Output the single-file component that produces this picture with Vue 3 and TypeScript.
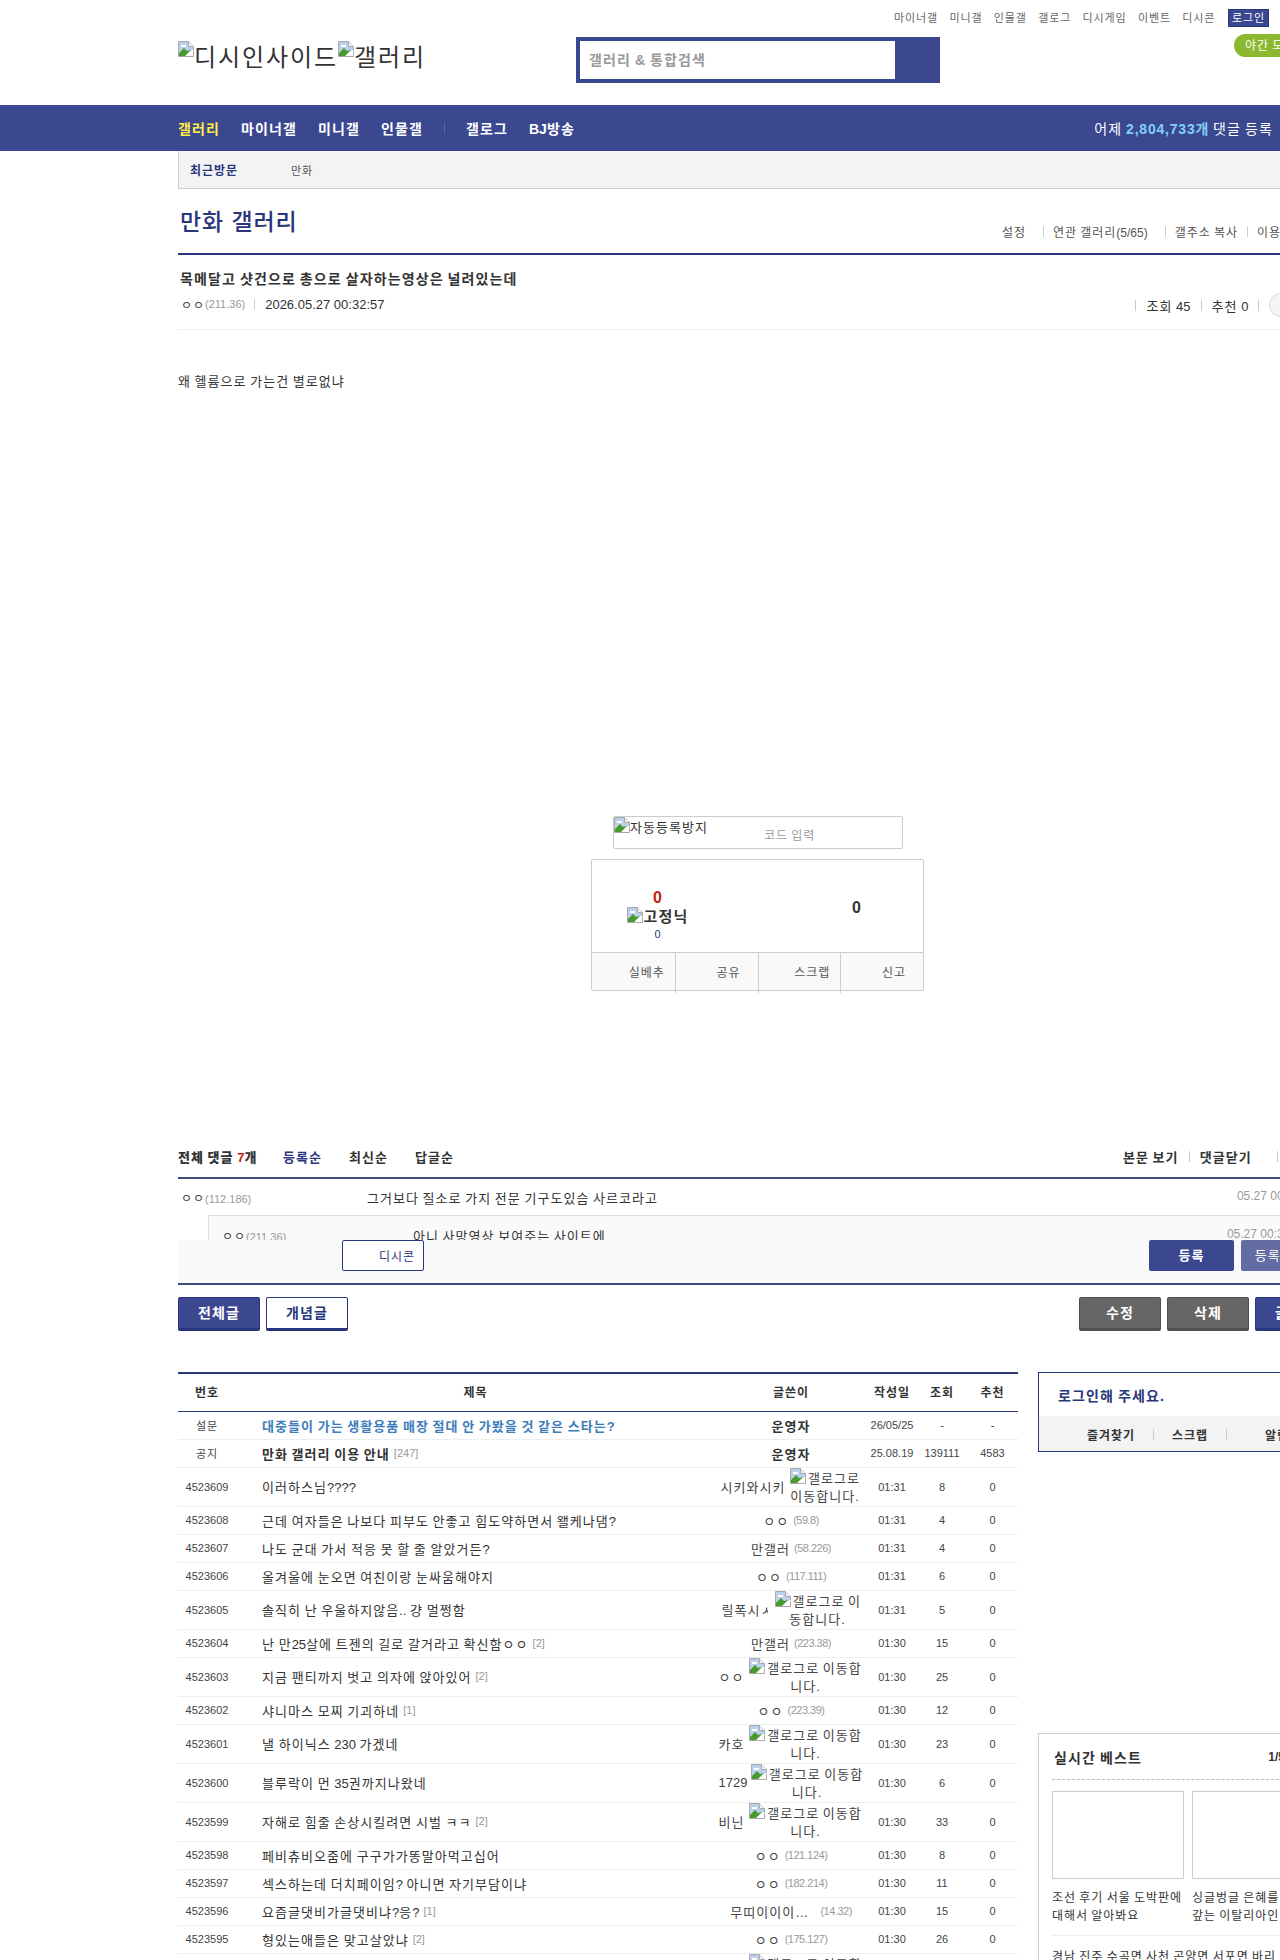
<script setup lang="ts">
interface Row {
  num: string
  title: string
  reply?: string
  nick: string
  cut?: boolean
  ip?: string
  alt?: [string, string]
  altWidth?: number
  date: string
  views: string
  rec: string
}

const topLinks = ['마이너갤', '미니갤', '인물갤', '갤로그', '디시게임', '이벤트', '디시콘']
const full: [string, string] = ['갤로그로 이동합', '니다.']

const rows: Row[] = [
  { num: '4523609', title: '이러하스님????', nick: '시키와시키', alt: ['갤로그로', '이동합니다.'], altWidth: 73, date: '01:31', views: '8', rec: '0' },
  { num: '4523608', title: '근데 여자들은 나보다 피부도 안좋고 힘도약하면서 왤케나댐?', nick: 'ㅇㅇ', ip: '(59.8)', date: '01:31', views: '4', rec: '0' },
  { num: '4523607', title: '나도 군대 가서 적응 못 할 줄 알았거든?', nick: '만갤러', ip: '(58.226)', date: '01:31', views: '4', rec: '0' },
  { num: '4523606', title: '올겨울에 눈오면 여친이랑 눈싸움해야지', nick: 'ㅇㅇ', ip: '(117.111)', date: '01:31', views: '6', rec: '0' },
  { num: '4523605', title: '솔직히 난 우울하지않음.. 걍 멀쩡함', nick: '릴폭시ㅅ', cut: true, alt: ['갤로그로 이', '동합니다.'], altWidth: 86, date: '01:31', views: '5', rec: '0' },
  { num: '4523604', title: '난 만25살에 트젠의 길로 갈거라고 확신함ㅇㅇ', reply: '[2]', nick: '만갤러', ip: '(223.38)', date: '01:30', views: '15', rec: '0' },
  { num: '4523603', title: '지금 팬티까지 벗고 의자에 앉아있어', reply: '[2]', nick: 'ㅇㅇ', alt: full, altWidth: 116, date: '01:30', views: '25', rec: '0' },
  { num: '4523602', title: '샤니마스 모찌 기괴하네', reply: '[1]', nick: 'ㅇㅇ', ip: '(223.39)', date: '01:30', views: '12', rec: '0' },
  { num: '4523601', title: '낼 하이닉스 230 가겠네', nick: '카호', alt: full, altWidth: 116, date: '01:30', views: '23', rec: '0' },
  { num: '4523600', title: '블루락이 먼 35권까지나왔네', nick: '1729', alt: full, altWidth: 113, date: '01:30', views: '6', rec: '0' },
  { num: '4523599', title: '자해로 힘줄 손상시킬려면 시벌 ㅋㅋ', reply: '[2]', nick: '비닌', alt: full, altWidth: 116, date: '01:30', views: '33', rec: '0' },
  { num: '4523598', title: '페비츄비오줌에 구구가가똥말아먹고십어', nick: 'ㅇㅇ', ip: '(121.124)', date: '01:30', views: '8', rec: '0' },
  { num: '4523597', title: '섹스하는데 더치페이임? 아니면 자기부담이냐', nick: 'ㅇㅇ', ip: '(182.214)', date: '01:30', views: '11', rec: '0' },
  { num: '4523596', title: '요즘글댓비가글댓비냐?응?', reply: '[1]', nick: '무띠이이이…\u00a0\u00a0', ip: '(14.32)', date: '01:30', views: '15', rec: '0' },
  { num: '4523595', title: '형있는애들은 맞고살았냐', reply: '[2]', nick: 'ㅇㅇ', ip: '(175.127)', date: '01:30', views: '26', rec: '0' },
  { num: '4523594', title: '', nick: 'ㅇㅇ', alt: full, altWidth: 116, date: '01:30', views: '9', rec: '0' },
]

// hangul gets tracked out below, ascii runs must stay at their normal width
function runs(text: string): { text: string; ascii: boolean }[] {
  return text
    .split(/([\x00-\x7f]+)/)
    .filter(Boolean)
    .map((part) => ({ text: part, ascii: /^[\x00-\x7f]/.test(part) }))
}
</script>

<template>
  <div class="page">
    <svg class="defs" width="0" height="0">
      <symbol id="broken" viewBox="0 0 16 16">
        <path d="M.5.5h10l5 5v10H.5z" fill="#fff" stroke="#a9a9a9" />
        <path d="M10.500.5v5h5" fill="#f4f4f4" stroke="#a9a9a9" />
        <path d="M1 1h9v5h5v3l-6 2-8 2z" fill="#bcd0ee" />
        <path d="M3 4h5v2H3z" fill="#fff" />
        <path d="M1 15v-3l5-5 3 3 4-1-6 6z" fill="#479a2e" />
        <path d="M9 16l7-7v1l-1 .5V15H10z" fill="#fff" />
      </symbol>
    </svg>

    <header class="head wrap">
      <div class="logo">
        <svg class="bk"><use href="#broken" /></svg>디시인사이드<svg class="bk"><use href="#broken" /></svg>갤러리
      </div>
      <form class="search">
        <input class="search__input" placeholder="갤러리 &amp; 통합검색" />
        <span class="search__btn" />
      </form>
      <div class="head__right">
        <nav class="top-links">
          <template v-for="(link, i) in topLinks" :key="link">
            <i v-if="i" class="sep" />
            <a>{{ link }}</a>
          </template>
          <a class="login-btn">로그인</a>
        </nav>
        <div class="night">야간 모드</div>
      </div>
    </header>

    <nav class="gnb">
      <div class="wrap gnb__in">
        <a class="on">갤러리</a>
        <a>마이너갤</a>
        <a>미니갤</a>
        <a>인물갤</a>
        <i class="gnb__sep" />
        <a>갤로그</a>
        <a><span class="n">BJ</span>방송</a>
        <p class="gnb__count">어제 <b>2,804,733개</b> 댓글 등록</p>
      </div>
    </nav>

    <div class="wrap recent">
      <b>최근방문</b>
      <span>만화</span>
    </div>

    <main class="wrap">
      <div class="gall-head">
        <h2>만화 갤러리</h2>
        <div class="gall-head__links">
          <a>설정</a><i class="sep sep--wide" />
          <a>연관 갤러리<span class="n">(5/65)</span></a><i class="sep sep--wide" />
          <a>갤주소 복사</a><i class="sep" />
          <a>이용안내</a>
        </div>
      </div>

      <section class="post-head">
        <h3>목메달고 샷건으로 총으로 살자하는영상은 널려있는데</h3>
        <div class="post-meta">
          <span class="nick">ㅇㅇ</span><span class="ip">(211.36)</span>
          <i class="sep sep--post" />
          <span class="stamp">2026.05.27 00:32:57</span>
          <span class="post-meta__right">
            <i class="sep" /><span>조회 <span class="n">45</span></span>
            <i class="sep" /><span>추천 <span class="n">0</span></span>
            <i class="sep" /><span class="circle" />
          </span>
        </div>
      </section>

      <section class="post-body">
        <p>왜 헬륨으로 가는건 별로없냐</p>
      </section>

      <div class="captcha">
        <span class="captcha__alt"><svg class="bk"><use href="#broken" /></svg>자동등록방지</span>
        <span class="captcha__ph">코드 입력</span>
      </div>

      <div class="rec">
        <div class="rec__top">
          <div class="rec__col rec__col--left">
            <strong class="red">0</strong>
            <span class="fix"><svg class="bk"><use href="#broken" /></svg>고정닉</span>
            <small>0</small>
          </div>
          <div class="rec__col rec__col--right">
            <strong>0</strong>
          </div>
        </div>
        <div class="rec__foot">
          <span>실베추</span><span>공유</span><span>스크랩</span><span>신고</span>
        </div>
      </div>

      <div class="cmt-head">
        <b>전체 댓글 <em class="n">7</em>개</b>
        <a class="active">등록순</a>
        <a>최신순</a>
        <a>답글순</a>
        <div class="cmt-head__right">
          <a>본문 보기</a><i class="sep" /><a>댓글닫기</a><i class="sep sep--far" />
        </div>
      </div>

      <div class="cmt-list">
        <div class="cmt">
          <span class="cmt__who"><span class="nick">ㅇㅇ</span><span class="ip">(112.186)</span></span>
          <span class="cmt__text">그거보다 질소로 가지 전문 기구도있슴 사르코라고</span>
          <span class="cmt__date">05.27 00:30:12</span>
        </div>
        <div class="cmt-reply">
          <span class="cmt__who"><span class="nick">ㅇㅇ</span><span class="ip">(211.36)</span></span>
          <span class="cmt__text">아니 사망영상 보여주는 사이트에</span>
          <span class="cmt__date">05.27 00:33:40</span>
        </div>
      </div>

      <div class="cmt-form">
        <a class="dccon">디시콘</a>
        <a class="submit">등록</a>
        <a class="submit submit--light">등록+추천</a>
      </div>

      <div class="btn-row">
        <a class="btn">전체글</a>
        <a class="btn btn--line">개념글</a>
        <a class="btn btn--grey btn--push">수정</a>
        <a class="btn btn--grey">삭제</a>
        <a class="btn">글쓰기</a>
      </div>

      <div class="columns">
        <table class="list">
          <colgroup>
            <col style="width: 58px" />
            <col />
            <col style="width: 152px" />
            <col style="width: 50px" />
            <col style="width: 50px" />
            <col style="width: 51px" />
          </colgroup>
          <thead>
            <tr>
              <th>번호</th><th>제목</th><th>글쓴이</th><th>작성일</th><th>조회</th><th>추천</th>
            </tr>
          </thead>
          <tbody>
            <tr>
              <td>설문</td>
              <td class="tit tit--poll">
                <span v-for="(r, i) in runs('대중들이 가는 생활용품 매장 절대 안 가봤을 것 같은 스타는?')" :key="i" :class="{ n: r.ascii }">{{ r.text }}</span>
              </td>
              <td class="writer writer--admin">운영자</td>
              <td class="n">26/05/25</td><td class="n">-</td><td class="n">-</td>
            </tr>
            <tr>
              <td>공지</td>
              <td class="tit tit--notice">만화 갤러리 이용 안내<span class="reply">[247]</span></td>
              <td class="writer writer--admin">운영자</td>
              <td class="n">25.08.19</td><td class="n">139111</td><td class="n">4583</td>
            </tr>
            <tr v-for="row in rows" :key="row.num" :class="{ tall: row.alt }">
              <td class="n">{{ row.num }}</td>
              <td class="tit">
                <span v-for="(r, i) in runs(row.title)" :key="i" :class="{ n: r.ascii }">{{ r.text }}</span>
                <span v-if="row.reply" class="reply">{{ row.reply }}</span>
              </td>
              <td class="writer">
                <div class="writer__in">
                  <span class="writer__nick" :class="{ 'writer__nick--cut': row.cut, n: /^\d+$/.test(row.nick) }">{{ row.nick }}</span>
                  <span v-if="row.ip" class="ip ip--list">{{ row.ip }}</span>
                  <span v-if="row.alt" class="alt" :style="{ width: row.altWidth + 'px' }">
                    <svg class="bk"><use href="#broken" /></svg>{{ row.alt[0] }}<br />{{ row.alt[1] }}
                  </span>
                </div>
              </td>
              <td class="n">{{ row.date }}</td><td class="n">{{ row.views }}</td><td class="n">{{ row.rec }}</td>
            </tr>
          </tbody>
        </table>

        <aside class="side">
          <div class="login-box">
            <p>로그인해 주세요.</p>
            <div class="login-box__tabs">
              <a>즐겨찾기</a><i class="sep sep--side" /><a>스크랩</a><i class="sep sep--side" /><a class="far">알림</a>
            </div>
          </div>
          <div class="best">
            <div class="best__head"><b>실시간 베스트</b><span class="n">1/5</span></div>
            <div class="best__grid">
              <div class="best__item">
                <div class="thumb" />
                <p>조선 후기 서울 도박판에<br />대해서 알아봐요</p>
              </div>
              <div class="best__item">
                <div class="thumb" />
                <p>싱글벙글 은혜를 원수로<br />갚는 이탈리아인.jpg</p>
              </div>
            </div>
            <p class="best__line">경남 진주 수곡면 사천 곤양면 서포면 바리</p>
          </div>
        </aside>
      </div>
    </main>
  </div>
</template>

<style>
html,
body {
  margin: 0;
  overflow-x: hidden;
}
</style>

<style scoped>
.page {
  width: 1280px;
  height: 1960px;
  overflow: hidden;
  font-family: "Liberation Sans", "Noto Sans CJK KR", sans-serif;
  font-size: 12px;
  color: #333;
  background: #fff;
}

/* the reference's hangul runs a full em wide, the CJK font here only .92em */
.page,
.page * {
  letter-spacing: 0.08em;
  word-spacing: -0.08em;
}

.page .n,
.page .ip,
.page .stamp,
.page .reply,
.page .cmt__date {
  letter-spacing: 0;
  word-spacing: 0;
}

.defs {
  position: absolute;
}

.wrap {
  width: 1160px;
  margin-left: 178px;
  box-sizing: border-box;
}

.bk {
  display: inline-block;
  width: 16px;
  height: 16px;
  margin-right: 2px;
  vertical-align: -1px;
}

.sep {
  display: inline-block;
  width: 1px;
  height: 11px;
  background: #ccc;
}

a {
  color: inherit;
  text-decoration: none;
}

/* header */
.head {
  display: flex;
  align-items: flex-start;
  height: 105px;
}

.logo {
  width: 398px;
  margin-top: 41px;
  font-size: 24px;
  line-height: 28px;
  white-space: nowrap;
}

.logo .bk {
  margin-right: 0;
  vertical-align: 9px;
}

.search {
  display: flex;
  box-sizing: border-box;
  width: 364px;
  height: 46px;
  margin-top: 37px;
  border: 4px solid #3b4890;
  background: #3b4890;
}

.search__input {
  box-sizing: border-box;
  width: 315px;
  height: 38px;
  padding: 0 9px;
  border: 0;
  outline: 0;
  font: bold 14px "Liberation Sans", "Noto Sans CJK KR", sans-serif;
  background: #fff;
}

.search__input::placeholder {
  color: #999;
}

.head__right {
  width: 329px;
}

.top-links {
  display: flex;
  align-items: center;
  height: 18px;
  margin-top: 9px;
  gap: 5.7px;
  justify-content: flex-end;
  font-size: 11px;
  color: #666;
  white-space: nowrap;
}

.top-links a {
  margin-top: -2px;
}

.top-links .login-btn {
  flex: none;
  box-sizing: border-box;
  width: 41px;
  height: 18px;
  margin: 0 0 0 7px;
  border: 1px solid #29367c;
  background: #3b4890;
  color: #fff;
  line-height: 16px;
  text-align: center;
}

.night {
  box-sizing: border-box;
  width: 90px;
  height: 23px;
  margin: 7px 0 0 294px;
  padding-left: 11px;
  border-radius: 12px 0 0 12px;
  background: #8ab82f;
  color: #fff;
  line-height: 25px;
  white-space: nowrap;
}

/* gnb */
.gnb {
  height: 46px;
  background: #3b4890;
}

.gnb__in {
  display: flex;
  align-items: center;
  width: 1095px;
  height: 46px;
  gap: 21px;
  color: #fff;
  font-size: 14px;
  font-weight: bold;
}

.gnb__in .on {
  color: #ffed44;
}

.gnb__sep {
  width: 1px;
  height: 12px;
  background: #5a66a8;
}

.gnb__count {
  margin: 0 0 0 auto;
  font-size: 14px;
  font-weight: normal;
}

.page .gnb__count b {
  color: #7fd0f5;
  letter-spacing: 0.8px;
}

.recent {
  display: flex;
  align-items: center;
  height: 38px;
  padding-left: 11px;
  border-left: 1px solid #ccc;
  border-bottom: 1px solid #ccc;
  background: #f3f3f3;
  font-size: 11px;
}

.recent b {
  width: 101px;
  color: #29367c;
  font-size: 12px;
}

.recent span {
  color: #555;
}

/* gallery title */
.gall-head {
  display: flex;
  align-items: flex-end;
  height: 66px;
  padding-left: 2px;
  border-bottom: 2px solid #29367c;
  box-sizing: border-box;
}

.page .gall-head h2 {
  width: 120px;
  margin: 0 0 16px;
  font-size: 23px;
  line-height: 30px;
  font-weight: 500;
  color: #29367c;
  letter-spacing: 0.9px;
  word-spacing: 0;
  white-space: nowrap;
}

.gall-head__links {
  display: flex;
  align-items: center;
  gap: 9px;
  margin: 0 0 13px 702px;
  color: #555;
  white-space: nowrap;
}

.sep--wide {
  margin-left: 8px;
}

/* post */
.post-head {
  height: 75px;
  border-bottom: 1px solid #eee;
  box-sizing: border-box;
}

.post-head h3 {
  margin: 0;
  padding: 14px 0 0 2px;
  font-size: 14px;
  line-height: 20px;
  color: #333;
}

.post-meta {
  display: flex;
  align-items: center;
  height: 20px;
  margin-top: 5px;
  padding-left: 3px;
}

.nick {
  color: #444;
  font-size: 12px;
}

.ip {
  color: #999;
  font-size: 11px;
}

.sep--post {
  margin: 0 10px 0 9px;
}

.stamp {
  font-size: 13px;
}

.post-meta__right {
  display: flex;
  align-items: center;
  gap: 10px;
  margin-left: 751px;
  font-size: 13px;
  white-space: nowrap;
  position: relative;
  top: 1px;
}

.circle {
  width: 22px;
  height: 22px;
  border: 1px solid #ddd;
  border-radius: 50%;
  background: #f5f5f5;
}

.post-body {
  height: 486px;
  box-sizing: border-box;
  padding-top: 42px;
  font-size: 13px;
}

.post-body p {
  margin: 0;
  line-height: 20px;
}

/* captcha + recommend */
.captcha {
  position: relative;
  box-sizing: border-box;
  width: 290px;
  height: 33px;
  margin-left: 435px;
  border: 1px solid #ccc;
  border-radius: 2px;
}

.captcha__alt {
  float: left;
  font-size: 13px;
  line-height: 18px;
}

.captcha__alt .bk {
  margin-right: 0;
}

.captcha__ph {
  position: absolute;
  left: 150px;
  top: 9px;
  color: #999;
}

.rec {
  box-sizing: border-box;
  width: 333px;
  height: 132px;
  margin: 10px 0 0 413px;
  border: 1px solid #ccc;
  border-radius: 2px;
}

.rec__top {
  display: flex;
  justify-content: space-between;
  height: 93px;
  border-bottom: 1px solid #ccc;
  box-sizing: border-box;
}

.rec__col {
  display: flex;
  flex-direction: column;
  align-items: center;
  justify-content: center;
  width: 132px;
}

.rec__col--left {
  padding-top: 17px;
}

.rec__col--right {
  padding-top: 4px;
}

.rec__col strong {
  font-size: 16px;
  line-height: 18px;
}

.rec__col .red {
  color: #c5200f;
}

.fix {
  font-size: 15px;
  font-weight: bold;
  line-height: 20px;
}

.fix .bk {
  margin-right: 0;
}

.rec__col small {
  font-size: 11px;
  color: #29367c;
  line-height: 14px;
}

.rec__foot {
  display: grid;
  grid-template-columns: repeat(4, 1fr);
  height: 37px;
  background: #f9f9f9;
}

.rec__foot span {
  padding-right: 10px;
  border-left: 1px solid #ccc;
  color: #555;
  line-height: 40px;
  text-align: right;
}

.rec__foot span:first-child {
  border-left: 0;
}

.rec__foot span:nth-child(even) {
  padding-right: 17px;
}

/* comments */
.cmt-head {
  display: flex;
  align-items: center;
  height: 38px;
  margin-top: 150px;
  border-bottom: 2px solid #3f4a7f;
  font-size: 13px;
  font-weight: bold;
  white-space: nowrap;
  padding-bottom: 6px;
  box-sizing: border-box;
}

.cmt-head b {
  width: 105px;
}

.cmt-head em {
  color: #c5200f;
  font-style: normal;
}

.cmt-head a {
  width: 66px;
}

.cmt-head .active {
  color: #29367c;
}

.cmt-head__right {
  display: flex;
  align-items: center;
  gap: 10px;
  margin-left: 642px;
}

.cmt-head__right a {
  width: auto;
}

.sep--far {
  margin-left: 15px;
}

.cmt-list {
  height: 61px;
  overflow: hidden;
}

.cmt {
  display: flex;
  align-items: center;
  height: 36px;
  padding: 0 21px 0 3px;
}

.cmt-reply {
  display: flex;
  align-items: center;
  height: 38px;
  margin-left: 30px;
  padding: 0 31px 0 13px;
  border-top: 1px solid #ddd;
  border-left: 1px solid #ddd;
  background: #fafafa;
}

.cmt__who {
  width: 186px;
  flex: none;
}

.cmt-reply .cmt__who {
  width: 191px;
}

.cmt__text {
  font-size: 13px;
  flex: none;
}

.cmt__date {
  margin-left: auto;
  margin-top: -2px;
  color: #999;
  white-space: nowrap;
}

.cmt-form {
  display: flex;
  align-items: flex-start;
  height: 45px;
  box-sizing: border-box;
  padding-left: 164px;
  border-bottom: 2px solid #3f4a7f;
  background: #f9f9f9;
  gap: 7px;
}

.dccon {
  box-sizing: border-box;
  width: 82px;
  height: 31px;
  margin-right: 718px;
  padding-right: 8px;
  border: 1px solid #29367c;
  border-radius: 2px;
  background: #fff;
  color: #29367c;
  line-height: 32px;
  text-align: right;
}

.submit {
  width: 85px;
  height: 31px;
  flex: none;
  border-radius: 2px;
  background: #3b4890;
  color: #fff;
  font-size: 13px;
  font-weight: bold;
  line-height: 31px;
  text-align: center;
}

.submit--light {
  width: 88px;
  background: #646da3;
  font-weight: normal;
}

.btn-row {
  display: flex;
  gap: 6px;
  margin-top: 12px;
}

.btn {
  box-sizing: border-box;
  width: 82px;
  height: 34px;
  flex: none;
  border: 1px solid #29367c;
  border-bottom-width: 3px;
  border-radius: 2px;
  background: #3b4890;
  color: #fff;
  font-size: 14px;
  font-weight: bold;
  line-height: 30px;
  text-align: center;
}

.btn--line {
  background: #fff;
  color: #29367c;
}

.btn--grey {
  background: #666;
  border-color: #505050;
}

.btn--push {
  margin-left: 725px;
}

/* list + sidebar */
.columns {
  display: flex;
  gap: 20px;
  align-items: flex-start;
  margin-top: 41px;
}

.list {
  width: 840px;
  flex: none;
  table-layout: fixed;
  border-collapse: collapse;
  border-top: 2px solid #29367c;
  font-size: 11px;
  color: #444;
}

.list th {
  height: 38px;
  padding: 0 0 2px;
  box-sizing: border-box;
  border-bottom: 1px solid #29367c;
  color: #333;
  font-size: 12px;
}

.list td {
  height: 27px;
  padding: 0;
  border-bottom: 1px solid #eee;
  text-align: center;
  white-space: nowrap;
}

.list tr.tall td {
  height: 38px;
}

.list .tit {
  padding-left: 26px;
  font-size: 13px;
  color: #333;
  text-align: left;
  overflow: hidden;
}

.list .tit--poll {
  color: #3b7dbb;
  font-weight: bold;
}

.tit--notice {
  font-weight: bold;
}

.reply {
  margin-left: 4px;
  color: #999;
  font-size: 11px;
  font-weight: normal;
  vertical-align: 2px;
}

.list .writer {
  padding: 0 5px;
  font-size: 13px;
  color: #444;
}

.list .writer--admin {
  font-weight: bold;
  color: #333;
}

.writer__in {
  display: flex;
  align-items: center;
  justify-content: center;
}

.writer__nick {
  flex: none;
  white-space: pre;
}

.writer__nick--cut {
  width: 46px;
  margin-right: 4px;
  overflow: hidden;
}

.page .ip--list {
  margin-left: 4px;
  letter-spacing: -0.5px;
}

.alt {
  flex: none;
  margin-left: 3px;
  line-height: 18px;
  text-align: center;
  white-space: nowrap;
}

.side {
  width: 300px;
  flex: none;
}

.login-box {
  box-sizing: border-box;
  height: 80px;
  border: 1px solid #29367c;
}

.login-box p {
  margin: 0;
  height: 43px;
  padding-left: 19px;
  color: #29367c;
  font-size: 14px;
  font-weight: bold;
  line-height: 46px;
}

.login-box__tabs {
  display: flex;
  align-items: center;
  height: 35px;
  padding: 2px 0 0 48px;
  box-sizing: border-box;
  background: #f3f3f3;
  font-weight: bold;
  gap: 18px;
}

.far {
  margin-left: 20px;
}

.best {
  box-sizing: border-box;
  height: 300px;
  margin-top: 281px;
  padding: 0 13px;
  border: 1px solid #ccc;
}

.best__head {
  display: flex;
  align-items: center;
  justify-content: space-between;
  height: 45px;
  padding-left: 2px;
  border-bottom: 1px dashed #bbb;
  font-size: 14px;
}

.best__head span {
  font-size: 12px;
  font-weight: bold;
  margin-right: 39px;
}

.best__grid {
  display: flex;
  gap: 8px;
  padding-top: 11px;
}

.best__item {
  width: 132px;
  flex: none;
}

.thumb {
  box-sizing: border-box;
  height: 88px;
  border: 1px solid #ccc;
}

.best__item p {
  margin: 0;
  padding-top: 10px;
  line-height: 18px;
  white-space: nowrap;
}

.best__line {
  margin: 10px 0 0;
  padding-top: 11px;
  border-top: 1px solid #eee;
  white-space: nowrap;
}
</style>
